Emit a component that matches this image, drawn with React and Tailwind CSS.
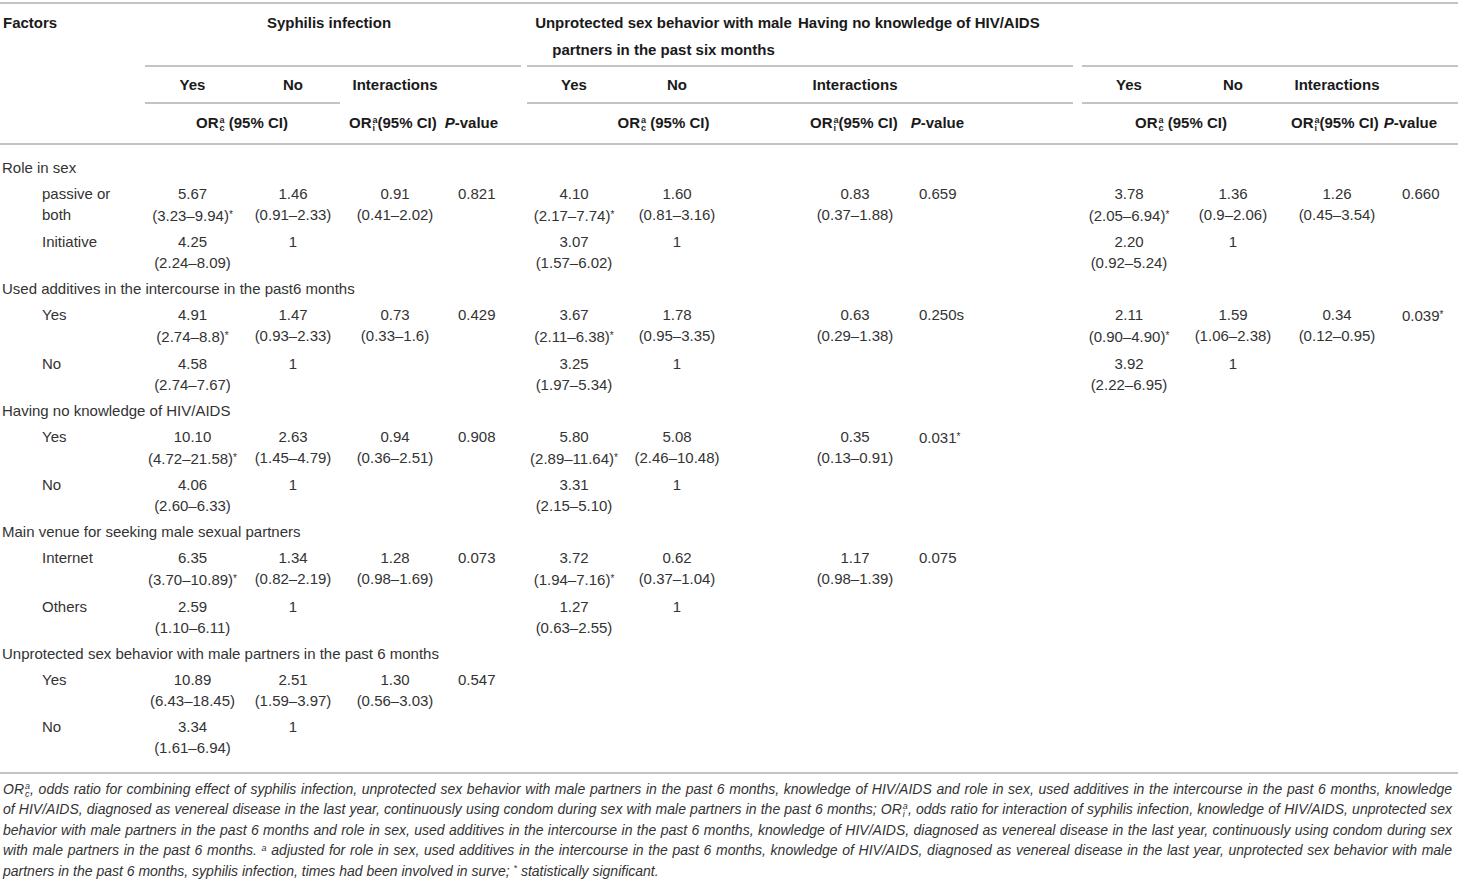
import React from "react";

// column template shared by header and body rows
const COLS =
  "grid grid-cols-[145px_95px_106px_98px_83px_94px_112px_67px_110px_172px_94px_114px_94px_74px]";

const S_COLS = ["col-start-2", "col-start-3", "col-start-4", "col-start-5 pl-[14px] text-left"];
const U_COLS = ["col-start-6", "col-start-7", "col-start-9", "col-start-10 pl-[9px] text-left"];
const H_COLS = ["col-start-11", "col-start-12", "col-start-13", "col-start-14 pl-[18px] text-left"];

const ROWS = [
  { group: "Role in sex" },
  {
    label: ["passive or", "both"],
    s: [["5.67", "(3.23–9.94)*"], ["1.46", "(0.91–2.33)"], ["0.91", "(0.41–2.02)"], "0.821"],
    u: [["4.10", "(2.17–7.74)*"], ["1.60", "(0.81–3.16)"], ["0.83", "(0.37–1.88)"], "0.659"],
    h: [["3.78", "(2.05–6.94)*"], ["1.36", "(0.9–2.06)"], ["1.26", "(0.45–3.54)"], "0.660"],
  },
  {
    label: ["Initiative"],
    s: [["4.25", "(2.24–8.09)"], ["1"]],
    u: [["3.07", "(1.57–6.02)"], ["1"]],
    h: [["2.20", "(0.92–5.24)"], ["1"]],
  },
  { group: "Used additives in the intercourse in the past6 months" },
  {
    label: ["Yes"],
    s: [["4.91", "(2.74–8.8)*"], ["1.47", "(0.93–2.33)"], ["0.73", "(0.33–1.6)"], "0.429"],
    u: [["3.67", "(2.11–6.38)*"], ["1.78", "(0.95–3.35)"], ["0.63", "(0.29–1.38)"], "0.250s"],
    h: [["2.11", "(0.90–4.90)*"], ["1.59", "(1.06–2.38)"], ["0.34", "(0.12–0.95)"], "0.039*"],
  },
  {
    label: ["No"],
    s: [["4.58", "(2.74–7.67)"], ["1"]],
    u: [["3.25", "(1.97–5.34)"], ["1"]],
    h: [["3.92", "(2.22–6.95)"], ["1"]],
  },
  { group: "Having no knowledge of HIV/AIDS" },
  {
    label: ["Yes"],
    s: [["10.10", "(4.72–21.58)*"], ["2.63", "(1.45–4.79)"], ["0.94", "(0.36–2.51)"], "0.908"],
    u: [["5.80", "(2.89–11.64)*"], ["5.08", "(2.46–10.48)"], ["0.35", "(0.13–0.91)"], "0.031*"],
  },
  {
    label: ["No"],
    s: [["4.06", "(2.60–6.33)"], ["1"]],
    u: [["3.31", "(2.15–5.10)"], ["1"]],
  },
  { group: "Main venue for seeking male sexual partners" },
  {
    label: ["Internet"],
    s: [["6.35", "(3.70–10.89)*"], ["1.34", "(0.82–2.19)"], ["1.28", "(0.98–1.69)"], "0.073"],
    u: [["3.72", "(1.94–7.16)*"], ["0.62", "(0.37–1.04)"], ["1.17", "(0.98–1.39)"], "0.075"],
  },
  {
    label: ["Others"],
    s: [["2.59", "(1.10–6.11)"], ["1"]],
    u: [["1.27", "(0.63–2.55)"], ["1"]],
  },
  { group: "Unprotected sex behavior with male partners in the past 6 months" },
  {
    label: ["Yes"],
    s: [["10.89", "(6.43–18.45)"], ["2.51", "(1.59–3.97)"], ["1.30", "(0.56–3.03)"], "0.547"],
  },
  {
    label: ["No"],
    s: [["3.34", "(1.61–6.94)"], ["1"]],
  },
];

function Star({ t }) {
  if (!t.endsWith("*")) return t;
  return (
    <>
      {t.slice(0, -1)}
      <span className="text-[10px] align-[3px]">*</span>
    </>
  );
}

// OR with stacked superscript "a" and a subscript
function OR({ sub }) {
  return (
    <span className="whitespace-nowrap">
      OR
      <span className="inline-flex flex-col align-[5px] text-[9px] leading-[8px] ml-[1px]">
        <span>a</span>
        <span>{sub}</span>
      </span>
    </span>
  );
}

function Group({ d, cols }) {
  if (!d) return null;
  const [yes, no, inter, p] = d;
  const cell = (v, cls) => (
    <div className={`${cls} text-center whitespace-nowrap`}>
      {v.map((t, i) => (
        <div key={i}>
          <Star t={t} />
        </div>
      ))}
    </div>
  );
  return (
    <>
      {cell(yes, cols[0])}
      {cell(no, cols[1])}
      {inter && cell(inter, cols[2])}
      {p && (
        <div className={`${cols[3]} whitespace-nowrap`}>
          <Star t={p} />
        </div>
      )}
    </>
  );
}

function Line() {
  return <div className="h-[2px] bg-[#c4c4c4]" />;
}

export default function App() {
  return (
    <div className="w-[1458px] min-h-[879px] bg-white pt-[2px] font-['Liberation_Sans',Arial,sans-serif] text-[15px] text-[#333]">
      <Line />

      {/* Header */}
      <div className="font-bold text-[#1a1a1a]">
        <div className={`${COLS} h-[61px] pt-[5px] leading-[27px]`}>
          <div className="pl-[3px]">Factors</div>
          <div className="col-start-2 col-span-4 text-center pr-[14px]">Syphilis infection</div>
          <div className="col-start-6 col-span-3 text-center whitespace-nowrap">
            Unprotected sex behavior with male
            <br />
            partners in the past six months
          </div>
          <div className="col-start-9 col-span-6 -ml-[2px] whitespace-nowrap">Having no knowledge of HIV/AIDS</div>
        </div>

        <div className={COLS}>
          <div className="col-start-2 col-span-4 mr-[6px]"><Line /></div>
          <div className="col-start-6 col-span-5 mr-[9px]"><Line /></div>
          <div className="col-start-11 col-span-4"><Line /></div>
        </div>

        <div className={`${COLS} h-[35px] leading-[35px] text-center`}>
          <div className="col-start-2">Yes</div>
          <div className="col-start-3">No</div>
          <div className="col-start-4">Interactions</div>
          <div className="col-start-6">Yes</div>
          <div className="col-start-7">No</div>
          <div className="col-start-9">Interactions</div>
          <div className="col-start-11">Yes</div>
          <div className="col-start-12">No</div>
          <div className="col-start-13">Interactions</div>
        </div>

        <div className={COLS}>
          <div className="col-start-2 col-span-2 mr-[6px]"><Line /></div>
          <div className="col-start-6 col-span-5 mr-[9px]"><Line /></div>
          <div className="col-start-11 col-span-4"><Line /></div>
        </div>

        <div className={`${COLS} h-[39px] items-center whitespace-nowrap`}>
          <div className="col-start-2 col-span-2 text-center pr-[7px]">
            <OR sub="c" /> (95% CI)
          </div>
          <div className="col-start-4 col-span-2 flex gap-[8px] pl-[3px]">
            <span><OR sub="i" />(95% CI)</span>
            <span><i>P</i>-value</span>
          </div>
          <div className="col-start-6 col-span-3 text-center">
            <OR sub="c" /> (95% CI)
          </div>
          <div className="col-start-9 col-span-2 flex gap-[13px] pl-[10px]">
            <span><OR sub="i" />(95% CI)</span>
            <span><i>P</i>-value</span>
          </div>
          <div className="col-start-11 col-span-2 text-center pr-[10px]">
            <OR sub="c" /> (95% CI)
          </div>
          <div className="col-start-13 col-span-2 flex gap-[5px] pl-[1px]">
            <span><OR sub="i" />(95% CI)</span>
            <span><i>P</i>-value</span>
          </div>
        </div>
      </div>

      <Line />

      {/* Body */}
      <div className="pt-[9px] pb-[11px] leading-[21px]">
        {ROWS.map((r, i) =>
          r.group ? (
            <div key={i} className="py-[2.6px] pl-[2px] whitespace-nowrap">
              {r.group}
            </div>
          ) : (
            <div key={i} className={`${COLS} py-[2.6px]`}>
              <div className="col-start-1 pl-[42px]">
                {r.label.map((l, j) => (
                  <div key={j}>{l}</div>
                ))}
              </div>
              <Group d={r.s} cols={S_COLS} />
              <Group d={r.u} cols={U_COLS} />
              <Group d={r.h} cols={H_COLS} />
            </div>
          )
        )}
      </div>

      <Line />

      {/* Footnote */}
      <div className="pt-[5px] pl-[3px] pr-[6px] italic text-[14px] leading-[20.5px] [&>div]:text-justify [&>div]:[text-align-last:justify]">
        <div>
          <OR sub="c" />, odds ratio for combining effect of syphilis infection, unprotected sex behavior with male partners in the past 6 months, knowledge of HIV/AIDS and role in sex, used additives in the intercourse in the past 6 months, knowledge
        </div>
        <div>
          of HIV/AIDS, diagnosed as venereal disease in the last year, continuously using condom during sex with male partners in the past 6 months; <OR sub="i" />, odds ratio for interaction of syphilis infection, knowledge of HIV/AIDS, unprotected sex
        </div>
        <div>
          behavior with male partners in the past 6 months and role in sex, used additives in the intercourse in the past 6 months, knowledge of HIV/AIDS, diagnosed as venereal disease in the last year, continuously using condom during sex
        </div>
        <div>
          with male partners in the past 6 months. <sup className="text-[9px]">a</sup> adjusted for role in sex, used additives in the intercourse in the past 6 months, knowledge of HIV/AIDS, diagnosed as venereal disease in the last year, unprotected sex behavior with male
        </div>
        <div className="[text-align-last:left]! text-left!">
          partners in the past 6 months, syphilis infection, times had been involved in surve; <sup className="text-[9px]">*</sup> statistically significant.
        </div>
      </div>
    </div>
  );
}
